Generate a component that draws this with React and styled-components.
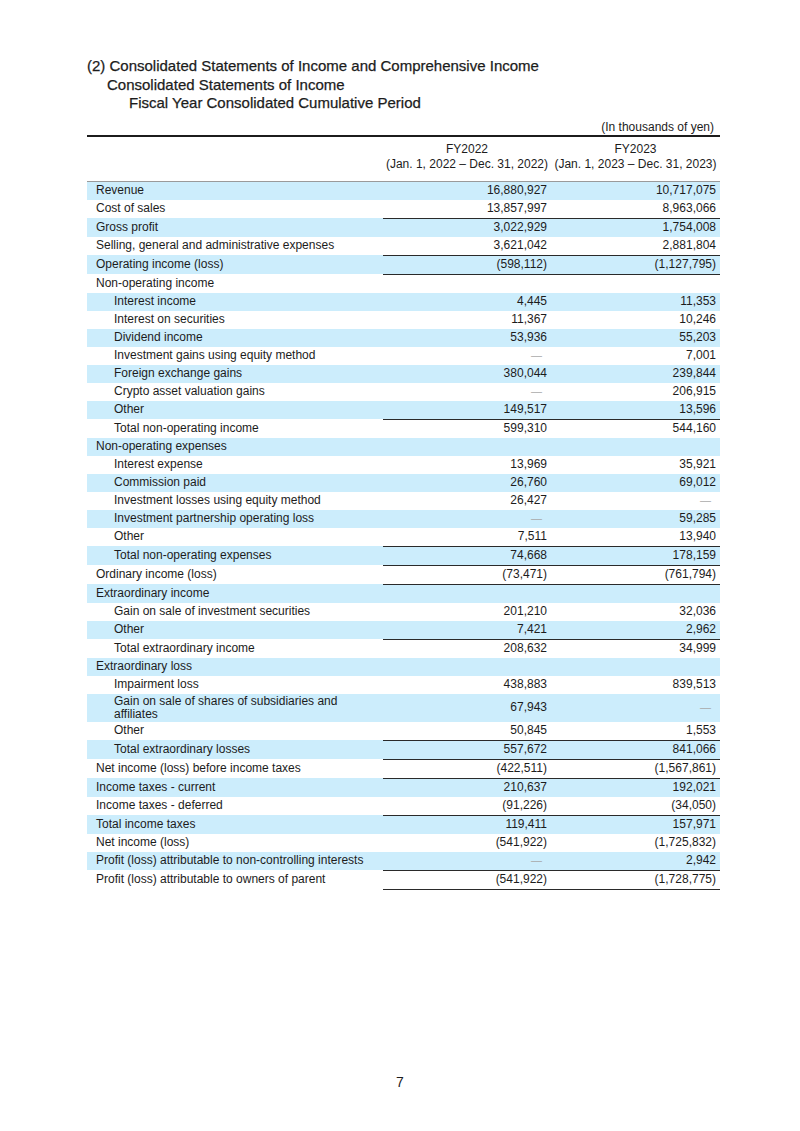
import React from "react";
import styled, { createGlobalStyle } from "styled-components";

const GlobalStyle = createGlobalStyle`
  html, body {
    margin: 0;
    padding: 0;
    background: #ffffff;
  }
  body {
    font-family: "Liberation Sans", Arial, sans-serif;
    color: #1c1c1c;
  }
`;

const Page = styled.div`
  width: 800px;
  height: 1131px;
  box-sizing: border-box;
  padding: 57px 80px 0 87px;
  display: flex;
  flex-direction: column;
`;

const Heading = styled.div`
  font-size: 15px;
  line-height: 18.5px;
  padding-left: ${(props) => props.$indent || 0}px;
  white-space: nowrap;
  -webkit-text-stroke: 0.25px #1c1c1c;
`;

const Unit = styled.div`
  width: 633px;
  margin-top: 7px;
  font-size: 12px;
  line-height: 14px;
  text-align: right;
  padding-right: 6px;
  box-sizing: border-box;
`;

const Table = styled.table`
  width: 633px;
  border-collapse: separate;
  border-spacing: 0;
  table-layout: fixed;
  border-top: 2px solid #1c1c1c;
  font-size: 12px;
  margin-top: 1px;
`;

const HeadCell = styled.th`
  font-weight: normal;
  text-align: center;
  line-height: 15px;
  padding: 5px 0 9px;
  border-bottom: 1px solid #9a9a9a;
  white-space: nowrap;
  vertical-align: bottom;
`;

// rows that carry a rule above their amounts are one pixel taller
const Row = styled.tr`
  height: ${(props) => 18 + (props.$line ? 1 : 0) + (props.$last ? 1 : 0)}px;
  background: ${(props) => (props.$shade ? "#ccedfc" : "transparent")};
`;

const Label = styled.td`
  padding: 1px 8px 1px ${(props) => 9 + (props.$indent ? 18 : 0)}px;
  line-height: 13px;
  vertical-align: middle;
`;

const Value = styled.td`
  padding: 1px 4px 1px 0;
  line-height: 13px;
  text-align: right;
  vertical-align: middle;
  white-space: nowrap;
  border-top: ${(props) => (props.$line ? "1px solid #2a2a2a" : "none")};
  border-bottom: ${(props) => (props.$last ? "1px solid #2a2a2a" : "none")};
`;

const Nil = styled.span`
  color: #a8a8a8;
  font-size: 11px;
  padding-right: 5px;
`;

const PageNumber = styled.div`
  margin-top: auto;
  margin-bottom: 41px;
  margin-left: -87px;
  width: 800px;
  text-align: center;
  font-size: 14px;
`;

const rows = [
  { label: "Revenue", a: "16,880,927", b: "10,717,075" },
  { label: "Cost of sales", a: "13,857,997", b: "8,963,066" },
  { label: "Gross profit", a: "3,022,929", b: "1,754,008", line: true },
  { label: "Selling, general and administrative expenses", a: "3,621,042", b: "2,881,804" },
  { label: "Operating income (loss)", a: "(598,112)", b: "(1,127,795)", line: true },
  { label: "Non-operating income", line: true },
  { label: "Interest income", a: "4,445", b: "11,353", indent: true },
  { label: "Interest on securities", a: "11,367", b: "10,246", indent: true },
  { label: "Dividend income", a: "53,936", b: "55,203", indent: true },
  { label: "Investment gains using equity method", a: null, b: "7,001", indent: true },
  { label: "Foreign exchange gains", a: "380,044", b: "239,844", indent: true },
  { label: "Crypto asset valuation gains", a: null, b: "206,915", indent: true },
  { label: "Other", a: "149,517", b: "13,596", indent: true },
  { label: "Total non-operating income", a: "599,310", b: "544,160", indent: true, line: true },
  { label: "Non-operating expenses" },
  { label: "Interest expense", a: "13,969", b: "35,921", indent: true },
  { label: "Commission paid", a: "26,760", b: "69,012", indent: true },
  { label: "Investment losses using equity method", a: "26,427", b: null, indent: true },
  { label: "Investment partnership operating loss", a: null, b: "59,285", indent: true },
  { label: "Other", a: "7,511", b: "13,940", indent: true },
  { label: "Total non-operating expenses", a: "74,668", b: "178,159", indent: true, line: true },
  { label: "Ordinary income (loss)", a: "(73,471)", b: "(761,794)", line: true },
  { label: "Extraordinary income", line: true },
  { label: "Gain on sale of investment securities", a: "201,210", b: "32,036", indent: true },
  { label: "Other", a: "7,421", b: "2,962", indent: true },
  { label: "Total extraordinary income", a: "208,632", b: "34,999", indent: true, line: true },
  { label: "Extraordinary loss" },
  { label: "Impairment loss", a: "438,883", b: "839,513", indent: true },
  { label: "Gain on sale of shares of subsidiaries and affiliates", a: "67,943", b: null, indent: true },
  { label: "Other", a: "50,845", b: "1,553", indent: true },
  { label: "Total extraordinary losses", a: "557,672", b: "841,066", indent: true, line: true },
  { label: "Net income (loss) before income taxes", a: "(422,511)", b: "(1,567,861)", line: true },
  { label: "Income taxes - current", a: "210,637", b: "192,021", line: true },
  { label: "Income taxes - deferred", a: "(91,226)", b: "(34,050)" },
  { label: "Total income taxes", a: "119,411", b: "157,971", line: true },
  { label: "Net income (loss)", a: "(541,922)", b: "(1,725,832)" },
  { label: "Profit (loss) attributable to non-controlling interests", a: null, b: "2,942" },
  { label: "Profit (loss) attributable to owners of parent", a: "(541,922)", b: "(1,728,775)", line: true, last: true },
];

const isSection = (row) => row.a === undefined && row.b === undefined;

const Amount = ({ value, section }) => {
  if (section) return null;
  if (value === null) return <Nil>—</Nil>;
  return value;
};

export default function App() {
  return (
    <>
      <GlobalStyle />
      <Page>
        <Heading>(2) Consolidated Statements of Income and Comprehensive Income</Heading>
        <Heading $indent={20}>Consolidated Statements of Income</Heading>
        <Heading $indent={42}>Fiscal Year Consolidated Cumulative Period</Heading>
        <Unit>(In thousands of yen)</Unit>
        <Table>
          <colgroup>
            <col style={{ width: 296 }} />
            <col style={{ width: 168 }} />
            <col style={{ width: 169 }} />
          </colgroup>
          <thead>
            <tr>
              <HeadCell />
              <HeadCell>
                FY2022
                <br />
                (Jan. 1, 2022 – Dec. 31, 2022)
              </HeadCell>
              <HeadCell>
                FY2023
                <br />
                (Jan. 1, 2023 – Dec. 31, 2023)
              </HeadCell>
            </tr>
          </thead>
          <tbody>
            {rows.map((row, index) => (
              <Row
                key={`row-${index}`}
                $shade={index % 2 === 0}
                $line={row.line}
                $last={row.last}
              >
                <Label $indent={row.indent}>{row.label}</Label>
                <Value $line={row.line} $last={row.last}>
                  <Amount value={row.a} section={isSection(row)} />
                </Value>
                <Value $line={row.line} $last={row.last}>
                  <Amount value={row.b} section={isSection(row)} />
                </Value>
              </Row>
            ))}
          </tbody>
        </Table>
        <PageNumber>7</PageNumber>
      </Page>
    </>
  );
}
